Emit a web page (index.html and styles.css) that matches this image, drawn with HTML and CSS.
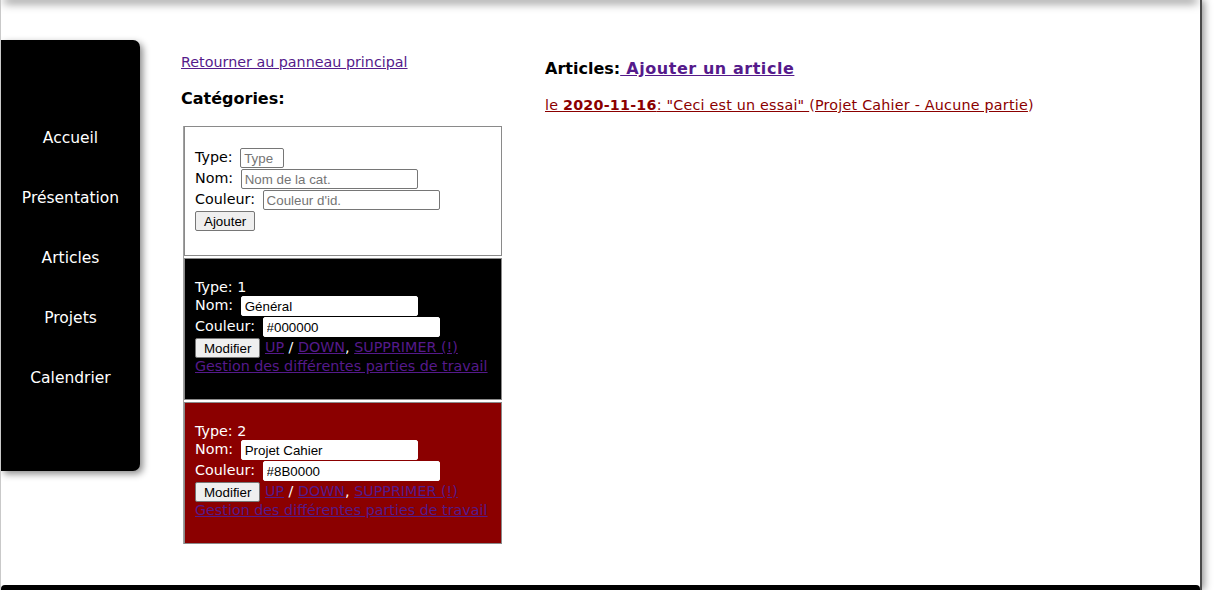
FILE: index.html
```html
<!DOCTYPE html>
<html lang="fr">
<head>
<meta charset="utf-8">
<title>Catégories et articles</title>
<link rel="stylesheet" href="styles.css">
</head>
<body>
<div class="page">
  <div class="topbar"></div>
  <div class="main">
    <nav class="sidebar">
      <a class="nav-item" href="#">Accueil</a>
      <a class="nav-item" href="#">Présentation</a>
      <a class="nav-item" href="#">Articles</a>
      <a class="nav-item" href="#">Projets</a>
      <a class="nav-item" href="#">Calendrier</a>
    </nav>
    <section class="col-cats">
      <a class="back" href="#">Retourner au panneau principal</a>
      <h2 class="title">Catégories:</h2>
      <div class="cats">
        <form class="cat cat-new">
          <div class="row">Type: <input class="inp inp-type" type="text" placeholder="Type"></div>
          <div class="row">Nom: <input class="inp" type="text" placeholder="Nom de la cat."></div>
          <div class="row">Couleur: <input class="inp" type="text" placeholder="Couleur d'id."></div>
          <div class="row"><button class="btn" type="button">Ajouter</button></div>
        </form>
        <form class="cat cat-black">
          <div class="line">Type: 1</div>
          <div class="row">Nom: <input class="inp inp-dark" type="text" value="Général"></div>
          <div class="row">Couleur: <input class="inp inp-dark" type="text" value="#000000"></div>
          <div class="row"><button class="btn" type="button">Modifier</button> <a class="lnk" href="#">UP</a> / <a class="lnk" href="#">DOWN</a>, <a class="lnk" href="#">SUPPRIMER (!)</a></div>
          <div class="line"><a class="lnk" href="#">Gestion des différentes parties de travail</a></div>
        </form>
        <form class="cat cat-red">
          <div class="line">Type: 2</div>
          <div class="row">Nom: <input class="inp inp-dark" type="text" value="Projet Cahier"></div>
          <div class="row">Couleur: <input class="inp inp-dark" type="text" value="#8B0000"></div>
          <div class="row"><button class="btn" type="button">Modifier</button> <a class="lnk" href="#">UP</a> / <a class="lnk" href="#">DOWN</a>, <a class="lnk" href="#">SUPPRIMER (!)</a></div>
          <div class="line"><a class="lnk" href="#">Gestion des différentes parties de travail</a></div>
        </form>
      </div>
    </section>
    <section class="col-articles">
      <h2 class="title">Articles:<a class="add" href="#"> Ajouter un article</a></h2>
      <p class="article"><a class="art-link" href="#">le <b>2020-11-16</b>: "Ceci est un essai" </a>(<a class="art-link" href="#">Projet Cahier - Aucune partie</a>)</p>
    </section>
  </div>
  <footer class="footer"></footer>
</div>
</body>
</html>
```

FILE: styles.css
```css
html, body {
  margin: 0;
  padding: 0;
  background: #fff;
  overflow: hidden;
}

body {
  font-family: "DejaVu Sans", Verdana, sans-serif;
  font-size: 14.3px;
  color: #000;
}

.page {
  width: 1200px;
  height: 590px;
  box-sizing: border-box;
  border-left: 1px solid #c9c9c9;
  box-shadow: 2px 0 0 #4a4a4a, 4px 0 8px rgba(0, 0, 0, 0.45);
  display: flex;
  flex-direction: column;
  overflow: hidden;
}

.topbar {
  height: 0;
  margin: 0 6px;
  box-shadow: 0 0 10px 3px rgba(0, 0, 0, 0.5);
  position: relative;
  z-index: 2;
}

.main {
  display: flex;
  align-items: flex-start;
  padding-top: 40px;
  height: 585px;
  flex-shrink: 0;
  box-sizing: border-box;
}

/* Sidebar */
.sidebar {
  width: 139px;
  background: #000;
  border-radius: 0 7px 7px 0;
  box-shadow: 3px 3px 7px rgba(0, 0, 0, 0.45);
  padding: 68px 0 63px;
  display: flex;
  flex-direction: column;
}

.nav-item {
  height: 60px;
  display: flex;
  align-items: center;
  justify-content: center;
  color: #fff;
  text-decoration: none;
  font-size: 15.5px;
}

/* Categories column */
.col-cats {
  margin-left: 41px;
  padding-top: 14px;
  display: flex;
  flex-direction: column;
  align-items: flex-start;
}

.back {
  color: #551a8b;
  line-height: 17px;
}

.title {
  font-size: 16px;
  font-weight: bold;
  line-height: 19px;
  margin: 0;
}

.col-cats .title {
  margin-top: 18px;
  margin-bottom: 18px;
}

.cats {
  margin-left: 2px;
  width: 318px;
  display: flex;
  flex-direction: column;
  gap: 2px;
  border-left: 1px solid #a0a0a0;
}

.cat {
  margin: 0;
  border: 1px solid #8a8a8a;
  padding: 0 0 0 10px;
}

.cat-new {
  background: #fff;
  padding-top: 20px;
  padding-bottom: 24px;
}

.cat-black {
  background: #000;
  color: #fff;
  padding-top: 20px;
  padding-bottom: 25px;
}

.cat-red {
  background: #8b0000;
  color: #fff;
  padding-top: 20px;
  padding-bottom: 25px;
}

.row {
  height: 21px;
  line-height: 21px;
  white-space: nowrap;
}

.line {
  height: 16px;
  line-height: 16px;
  white-space: nowrap;
}

.inp {
  font-family: "Liberation Sans", Arial, sans-serif;
  font-size: 13.33px;
  width: 177px;
  height: 20px;
  box-sizing: border-box;
  padding: 1px 3px;
  border: 1px solid #767676;
  border-radius: 2px;
  background: #fff;
  color: #000;
  vertical-align: middle;
  margin: 0 0 0 3px;
}

.inp::placeholder {
  color: #757575;
}

.inp-type {
  width: 44px;
}

.inp-dark {
  border-color: #fff;
}

.btn {
  font-family: "Liberation Sans", Arial, sans-serif;
  font-size: 13.33px;
  height: 20px;
  padding: 0 8px;
  margin: 0;
  border: 1px solid #767676;
  border-radius: 2px;
  background: #efefef;
  color: #000;
  vertical-align: middle;
}

.lnk {
  color: #551a8b;
}

/* Articles column */
.col-articles {
  margin-left: 43px;
  padding-top: 19px;
}

.add {
  color: #551a8b;
  letter-spacing: 0.55px;
}

.article {
  margin: 18px 0 0;
  line-height: 18px;
  color: #8b0000;
  letter-spacing: 0.22px;
}

.art-link {
  color: #8b0000;
}

.footer {
  height: 40px;
  flex-shrink: 0;
  background: #000;
  border-radius: 4px 4px 0 0;
}
```
